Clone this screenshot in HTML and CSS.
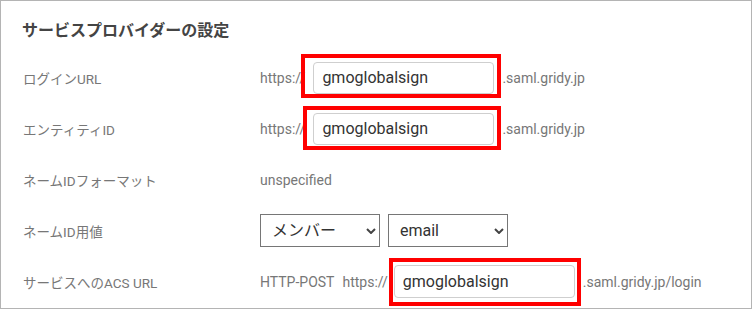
FILE: index.html
```html
<!DOCTYPE html>
<html lang="ja">
<head>
<meta charset="utf-8">
<title>サービスプロバイダーの設定</title>
<link rel="stylesheet" href="styles.css">
</head>
<body>
<div class="panel">
  <h2 class="title">サービスプロバイダーの設定</h2>
  <div class="row">
    <div class="label">ログインURL</div>
    <div class="value">
      <span class="muted">https://</span>
      <span class="field mark mark-a"><input class="text" type="text" value="gmoglobalsign"></span>
      <span class="muted">.saml.gridy.jp</span>
    </div>
  </div>
  <div class="row">
    <div class="label">エンティティID</div>
    <div class="value">
      <span class="muted">https://</span>
      <span class="field mark mark-b"><input class="text" type="text" value="gmoglobalsign"></span>
      <span class="muted">.saml.gridy.jp</span>
    </div>
  </div>
  <div class="row">
    <div class="label">ネームIDフォーマット</div>
    <div class="value">
      <span class="muted">unspecified</span>
    </div>
  </div>
  <div class="row">
    <div class="label">ネームID用値</div>
    <div class="value value-selects">
      <span class="select-wrap">
        <select class="select"><option>メンバー</option></select>
        <svg class="chev" width="10" height="6" viewBox="0 0 10 6"><path d="M1 1 L5 5 L9 1" fill="none" stroke="#444" stroke-width="2"/></svg>
      </span>
      <span class="select-wrap">
        <select class="select"><option>email</option></select>
        <svg class="chev" width="10" height="6" viewBox="0 0 10 6"><path d="M1 1 L5 5 L9 1" fill="none" stroke="#444" stroke-width="2"/></svg>
      </span>
    </div>
  </div>
  <div class="row">
    <div class="label">サービスへのACS URL</div>
    <div class="value">
      <span class="muted">HTTP-POST</span>
      <span class="muted">https://</span>
      <span class="field mark mark-c"><input class="text text-tall" type="text" value="gmoglobalsign"></span>
      <span class="muted">.saml.gridy.jp/login</span>
    </div>
  </div>
</div>
</body>
</html>
```

FILE: styles.css
```css
html, body {
  margin: 0;
  padding: 0;
  background: #fff;
}

body {
  font-family: "Roboto", "Noto Sans CJK JP", sans-serif;
}

.panel {
  box-sizing: border-box;
  width: 752px;
  height: 309px;
  border: 1px solid #b4b4b4;
  padding-left: 21px;
}

.title {
  box-sizing: border-box;
  margin: 0;
  height: 51px;
  padding-top: 19px;
  font-size: 16px;
  line-height: 22px;
  font-weight: 700;
  color: #444;
}

.row {
  display: grid;
  grid-template-columns: 238px 1fr;
  align-items: center;
  height: 51px;
}

.label {
  font-size: 13.5px;
  color: #777;
  padding-left: 1px;
}

.value {
  display: flex;
  align-items: center;
  gap: 8px;
  font-size: 14px;
  color: #777;
}

.value-selects {
  gap: 8px;
}

.muted {
  color: #777;
}

.field {
  position: relative;
  display: inline-flex;
}

.text {
  box-sizing: border-box;
  width: 181px;
  height: 32px;
  border: 1px solid #cfcfcf;
  border-radius: 4px;
  padding: 0 8px;
  font-family: "Roboto", "Noto Sans CJK JP", sans-serif;
  font-size: 16px;
  color: #333;
  background: #fff;
  outline: none;
}

.text-tall {
  height: 33px;
}

.mark::after {
  content: "";
  position: absolute;
  box-sizing: border-box;
  border: 4px solid #f00;
  pointer-events: none;
}

.mark-a::after {
  top: -8px;
  left: -12px;
  right: -7px;
  bottom: -4px;
}

.mark-b::after {
  top: -7px;
  left: -10px;
  right: -7px;
  bottom: -5px;
}

.mark-c {
  margin-left: -2px;
}

.mark-c::after {
  top: -7px;
  left: -5px;
  right: -6px;
  bottom: -8px;
}

.select-wrap {
  position: relative;
  display: inline-flex;
}

.select {
  box-sizing: border-box;
  width: 120px;
  height: 33px;
  border: 1px solid #767676;
  border-radius: 0;
  padding: 0 24px 0 11px;
  font-family: "Roboto", "Noto Sans CJK JP", sans-serif;
  font-size: 16px;
  color: #333;
  background: #fff;
  -webkit-appearance: none;
  appearance: none;
  outline: none;
}

.chev {
  position: absolute;
  right: 4px;
  top: 14px;
  pointer-events: none;
}
```
